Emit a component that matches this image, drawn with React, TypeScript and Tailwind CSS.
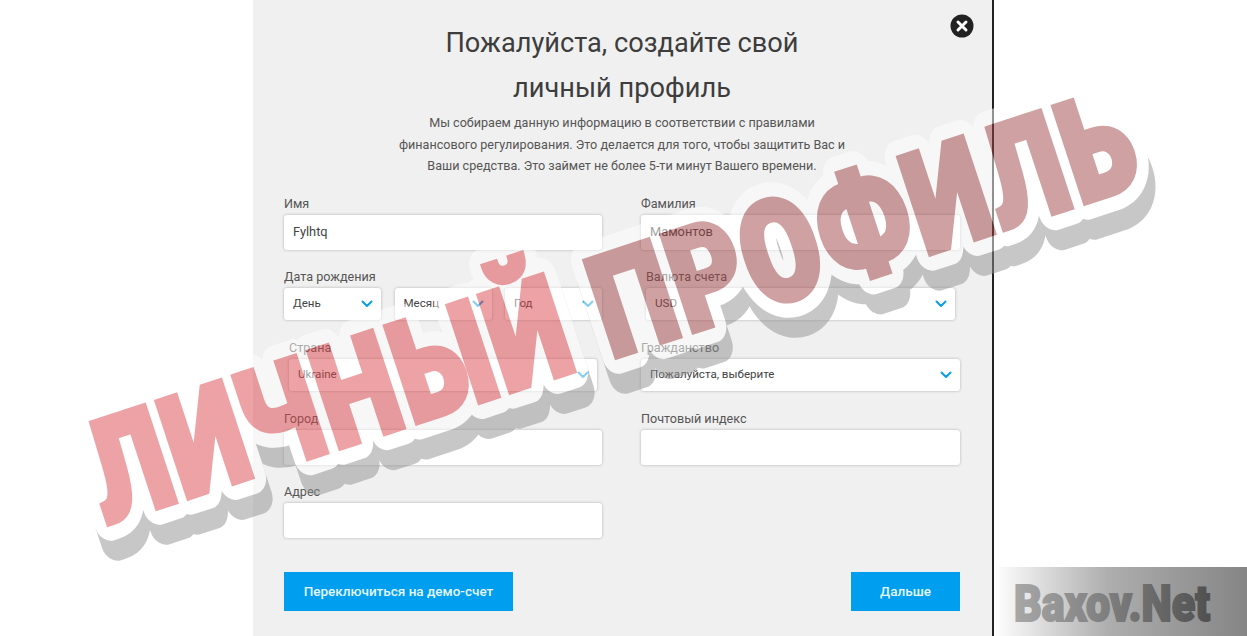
import React from 'react';

const font = { fontFamily: '"Roboto", "Liberation Sans", sans-serif' };

const Label: React.FC<{ text: string; className?: string }> = ({ text, className }) => (
    <div className={`h-[15px] text-[12.6px] leading-[15px] text-[#555] ${className ?? ''}`}>{text}</div>
);

const Chevron: React.FC = () => (
    <svg width="12" height="8" viewBox="0 0 12 8" fill="none" className="shrink-0">
        <path d="M1.5 1.5 L6 6 L10.5 1.5" stroke="#0a9fe8" strokeWidth="2" strokeLinecap="round" strokeLinejoin="round" />
    </svg>
);

const Select: React.FC<{ value: string; className?: string }> = ({ value, className }) => (
    <div className={`flex h-[32px] items-center justify-between rounded-[3px] bg-white pl-[9px] pr-[8px] text-[11.6px] text-[#444] shadow-[0_0_3px_rgba(0,0,0,0.28)] ${className ?? ''}`}>
        <span>{value}</span>
        <Chevron />
    </div>
);

const Input: React.FC<{ value?: string }> = ({ value }) => (
    <div className="flex h-[35px] items-center rounded-[3px] bg-white px-[9px] text-[12.8px] text-[#444] shadow-[0_0_3px_rgba(0,0,0,0.28)]">
        {value}
    </div>
);

const Watermark: React.FC = () => {
    const textProps = {
        x: 108,
        y: 523,
        fontSize: 140,
        fontWeight: 900,
        letterSpacing: 4,
        textLength: 1096,
        lengthAdjust: 'spacingAndGlyphs' as const,
        fontFamily: '"Roboto", "Liberation Sans", sans-serif',
    };
    return (
        <svg width="1247" height="636" viewBox="0 0 1247 636" className="pointer-events-none absolute left-0 top-0">
            <g transform="rotate(-18.2 110 527)" opacity="0.5">
                <text {...textProps} transform="translate(0 21)" fill="#919191" stroke="#919191" strokeWidth="36" strokeLinejoin="round">
                    ЛИЧНЫЙ ПРОФИЛЬ
                </text>
                <text {...textProps} fill="#fff" stroke="#fff" strokeWidth="36" strokeLinejoin="round">
                    ЛИЧНЫЙ ПРОФИЛЬ
                </text>
                <text {...textProps} strokeWidth="7" strokeLinejoin="miter" strokeMiterlimit="2">
                    <tspan fill="#dd474d" stroke="#dd474d">ЛИЧНЫЙ </tspan>
                    <tspan fill="#a14547" stroke="#a14547">ПРОФИЛЬ</tspan>
                </text>
            </g>
        </svg>
    );
};

const BaxovLogo: React.FC = () => (
    <svg width="254" height="69" viewBox="0 0 254 69" className="block">
        <defs>
            <linearGradient id="baxov" gradientUnits="userSpaceOnUse" x1="19" y1="0" x2="217" y2="0">
                <stop offset="0" stopColor="#a8a8a8" />
                <stop offset="1" stopColor="#505050" />
            </linearGradient>
        </defs>
        <text
            x="20"
            y="54"
            fontSize="50"
            fontWeight="900"
            fontFamily='"Roboto", "Liberation Sans", sans-serif'
            textLength="196"
            lengthAdjust="spacingAndGlyphs"
            fill="url(#baxov)"
            stroke="url(#baxov)"
            strokeWidth="2"
        >
            Baxov.Net
        </text>
    </svg>
);

const App: React.FC = () => {
    return (
        <div className="relative flex h-[636px] w-[1247px] overflow-hidden bg-white pl-[253px]" style={font}>
            <div className="relative h-full w-[741px] border-r-2 border-[#222] bg-[#f0f0f0] pl-[31px] pr-[32px]">
                <svg width="24" height="24" viewBox="0 0 24 24" className="absolute left-[697px] top-[14px]">
                    <circle cx="12" cy="12" r="11.5" fill="#222" />
                    <path d="M8 8 L16 16 M16 8 L8 16" stroke="#fff" strokeWidth="3" strokeLinecap="round" />
                </svg>

                <h1 className="pt-[21px] text-center text-[27.2px] font-normal leading-[45px] text-[#3d3d3d]">
                    Пожалуйста, создайте свой
                    <br />
                    личный профиль
                </h1>
                <p className="mt-[1px] text-center text-[12.6px] leading-[21.5px] text-[#555]">
                    Мы собираем данную информацию в соответствии с правилами
                    <br />
                    финансового регулирования. Это делается для того, чтобы защитить Вас и
                    <br />
                    Ваши средства. Это займет не более 5-ти минут Вашего времени.
                </p>

                <div className="mt-[19px] grid grid-cols-[318px_319px] gap-x-[39px]">
                    <div>
                        <Label text="Имя" className="mb-[4px]" />
                        <Input value="Fylhtq" />
                    </div>
                    <div>
                        <Label text="Фамилия" className="mb-[4px]" />
                        <Input value="Мамонтов" />
                    </div>

                    <div className="mt-[19px]">
                        <Label text="Дата рождения" className="mb-[4px]" />
                        <div className="grid grid-cols-[97px_97px_97px] gap-x-[13.5px]">
                            <Select value="День" />
                            <Select value="Месяц" />
                            <Select value="Год" />
                        </div>
                    </div>
                    <div className="mt-[19px] px-[5px]">
                        <Label text="Валюта счета" className="mb-[4px]" />
                        <Select value="USD" />
                    </div>

                    <div className="mt-[20px] px-[5px]">
                        <Label text="Страна" className="mb-[4px]" />
                        <Select value="Ukraine" />
                    </div>
                    <div className="mt-[20px]">
                        <Label text="Гражданство" className="mb-[4px]" />
                        <Select value="Пожалуйста, выберите" />
                    </div>

                    <div className="mt-[20px]">
                        <Label text="Город" className="mb-[4px]" />
                        <Input />
                    </div>
                    <div className="mt-[20px]">
                        <Label text="Почтовый индекс" className="mb-[4px]" />
                        <Input />
                    </div>

                    <div className="mt-[19px]">
                        <Label text="Адрес" className="mb-[4px]" />
                        <Input />
                    </div>
                </div>

                <div className="mt-[34px] flex justify-between">
                    <button className="h-[39px] w-[229px] bg-[#009eef] text-[13.5px] font-medium text-[#e4f5ff]">
                        Переключиться на демо-счет
                    </button>
                    <button className="h-[39px] w-[109px] bg-[#009eef] text-[13.5px] font-medium text-[#e4f5ff]">
                        Дальше
                    </button>
                </div>
            </div>

            <div className="flex flex-1 flex-col justify-end">
                <div className="h-[69px] bg-gradient-to-r from-white via-[#aeaeae] via-45% to-[#858585]">
                    <BaxovLogo />
                </div>
            </div>

            <Watermark />
        </div>
    );
};

export default App;
